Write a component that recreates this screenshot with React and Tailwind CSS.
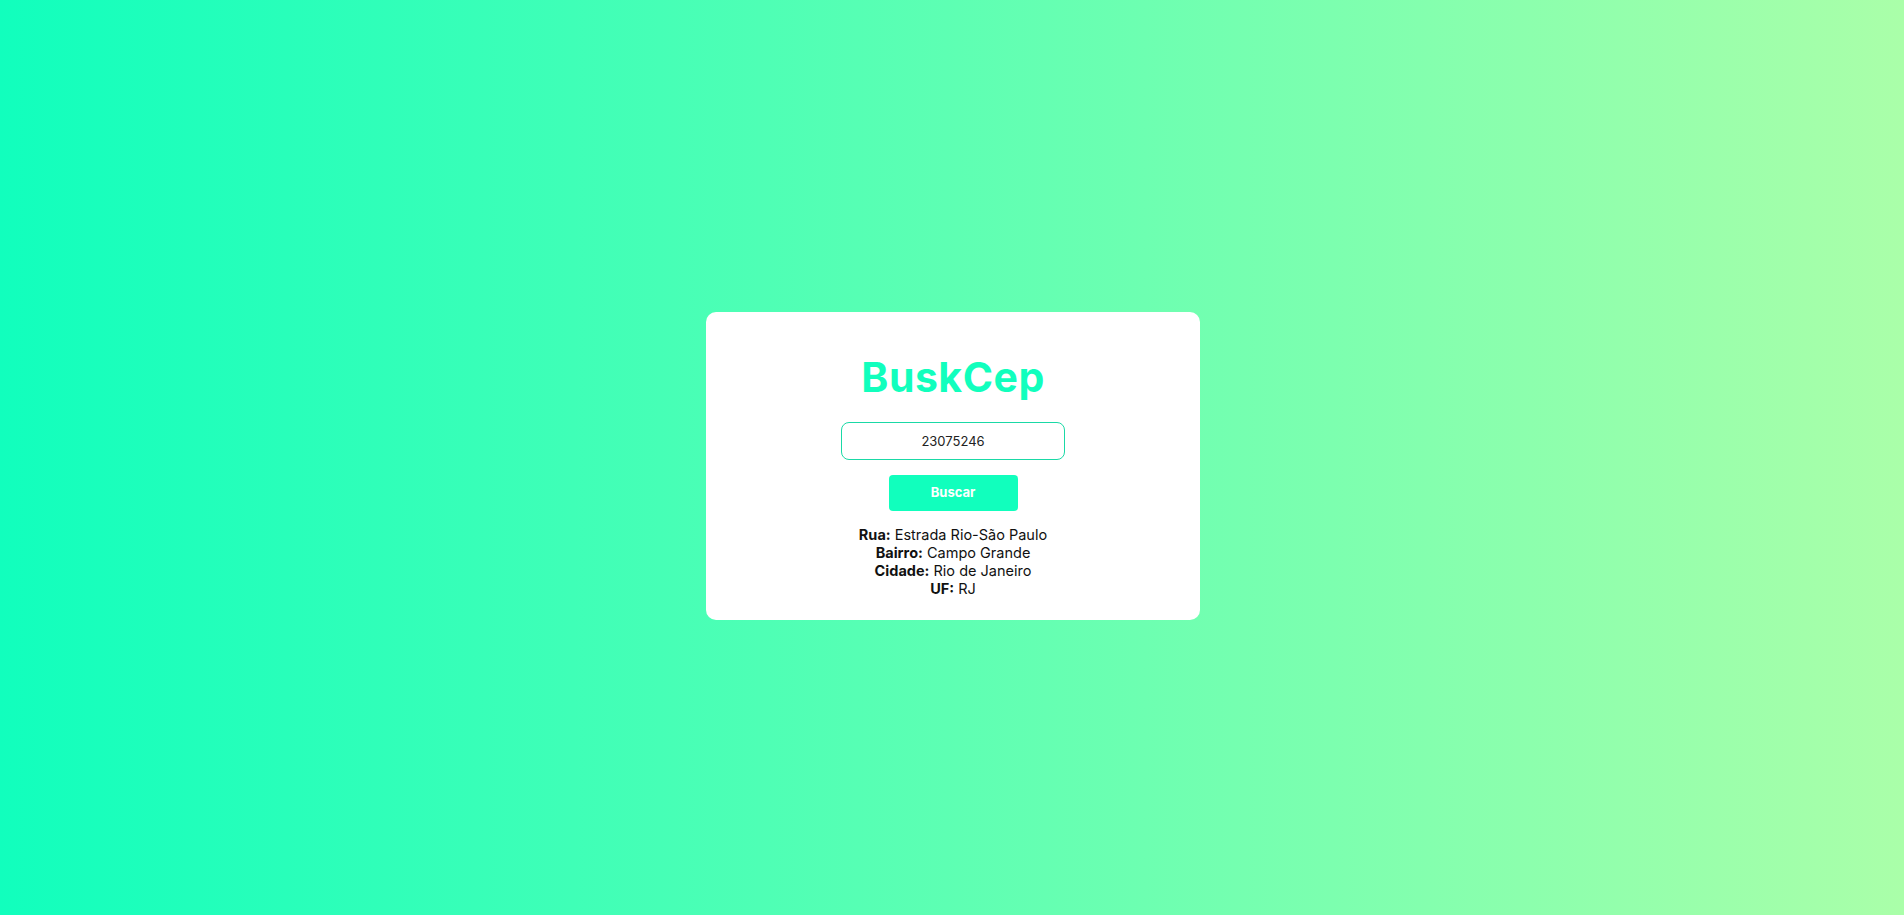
import { useState } from 'react';

export default function App() {
  const [cep, setCep] = useState('23075246');
  const [endereco] = useState({
    logradouro: 'Estrada Rio-São Paulo',
    bairro: 'Campo Grande',
    localidade: 'Rio de Janeiro',
    uf: 'RJ',
  });

  return (
    <div className="min-h-screen w-full bg-[linear-gradient(to_right,#11ffbd,#aaffa9)] flex items-center justify-center font-['Inter',sans-serif]">
      <div className="mt-[17px] ml-[2px] w-[494px] h-[308px] bg-white rounded-[10px] flex flex-col items-center pt-[40px]">
        <h1 className="text-[41px] leading-[50px] font-bold text-[#11ffbd] tracking-[0.5px]">BuskCep</h1>

        <input
          value={cep}
          onChange={(e) => setCep(e.target.value)}
          className="mt-[20px] w-[224px] h-[38px] rounded-[8px] border border-[#1ad9a6] text-center text-[13px] text-[#222] outline-none"
        />

        <button className="mt-[15px] w-[129px] h-[36px] rounded-[4px] bg-[#11ffbd] text-white text-[13px] font-bold">
          Buscar
        </button>

        <div className="mt-[15px] text-center text-[14.5px] leading-[18px] text-[#111]">
          <p><strong>Rua:</strong> {endereco.logradouro}</p>
          <p><strong>Bairro:</strong> {endereco.bairro}</p>
          <p><strong>Cidade:</strong> {endereco.localidade}</p>
          <p><strong>UF:</strong> {endereco.uf}</p>
        </div>
      </div>
    </div>
  );
}
